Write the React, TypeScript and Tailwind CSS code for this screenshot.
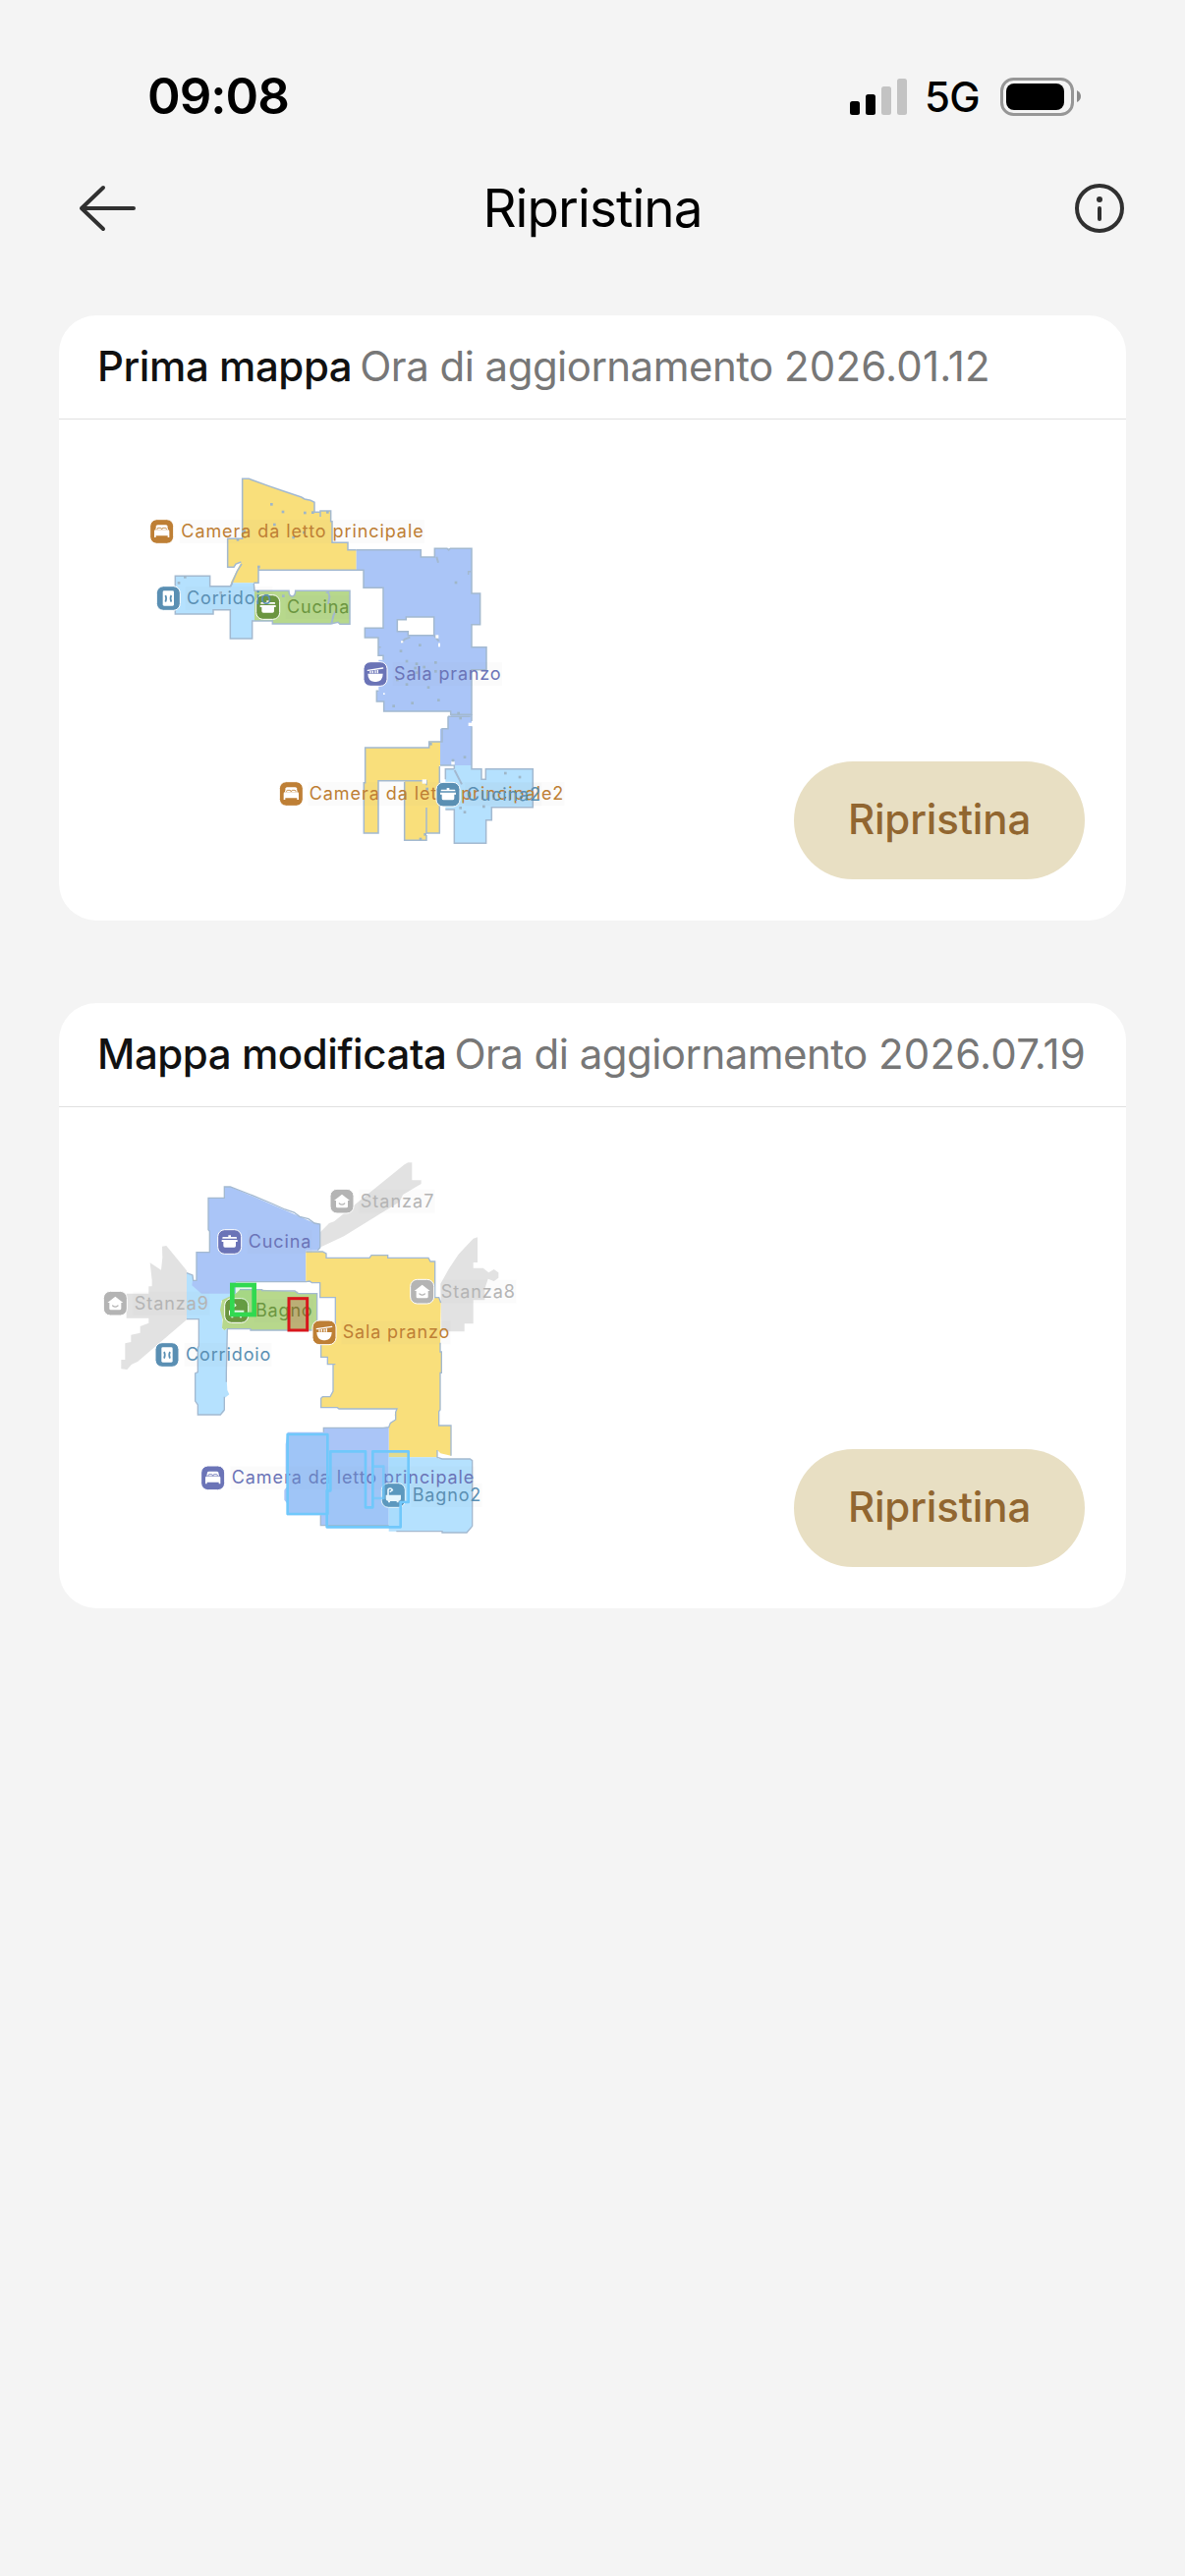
import React from 'react';

type RoomIcon = 'bed' | 'door' | 'pot' | 'bowl' | 'bath' | 'house';

interface RoomLabel {
  name: string;
  icon: RoomIcon;
  color: string;
  // icon center
  cx: number;
  cy: number;
  // text start and width
  x: number;
  width: number;
}

const ORANGE = '#be7f35';
const BLUE = '#5a8fb3';
const GREEN = '#6b9540';
const PURPLE = '#6b74b7';
const GRAY = '#b4b4b4';

const WALL = '#a3b9d0';

const firstMapLabels: RoomLabel[] = [
  { name: 'Camera da letto principale', icon: 'bed', color: ORANGE, cx: 74, cy: 213, x: 133, width: 739 },
  { name: 'Cucina', icon: 'pot', color: GREEN, cx: 398, cy: 444, x: 456, width: 190 },
  { name: 'Corridoio', icon: 'door', color: BLUE, cx: 94, cy: 417, x: 150, width: 259 },
  { name: 'Sala pranzo', icon: 'bowl', color: PURPLE, cx: 726, cy: 648, x: 783, width: 326 },
  { name: 'Camera da letto principale2', icon: 'bed', color: ORANGE, cx: 469, cy: 1014, x: 524, width: 776 },
  { name: 'Cucina2', icon: 'pot', color: BLUE, cx: 948, cy: 1016, x: 1004, width: 226 },
];

const editedMapLabels: RoomLabel[] = [
  { name: 'Stanza7', icon: 'house', color: GRAY, cx: 774, cy: 158, x: 830, width: 224 },
  { name: 'Stanza8', icon: 'house', color: GRAY, cx: 1019, cy: 434, x: 1076, width: 226 },
  { name: 'Stanza9', icon: 'house', color: GRAY, cx: 82, cy: 470, x: 140, width: 226 },
  { name: 'Cucina', icon: 'pot', color: PURPLE, cx: 431, cy: 282, x: 488, width: 191 },
  { name: 'Bagno', icon: 'bath', color: GREEN, cx: 452, cy: 492, x: 510, width: 173 },
  { name: 'Corridoio', icon: 'door', color: BLUE, cx: 240, cy: 627, x: 297, width: 259 },
  { name: 'Sala pranzo', icon: 'bowl', color: ORANGE, cx: 720, cy: 559, x: 776, width: 326 },
  { name: 'Camera da letto principale', icon: 'bed', color: PURPLE, cx: 380, cy: 1003, x: 437, width: 740 },
  { name: 'Bagno2', icon: 'bath', color: BLUE, cx: 931, cy: 1056, x: 989, width: 209 },
];

const IconShape: React.FC<{ icon: RoomIcon; color: string }> = ({ icon, color }) => {
  switch (icon) {
    case 'bed':
      return (
        <g>
          <path d="M-17 -17q1 -3 5 -3h24q4 0 5 3l2 11h-38z" fill="#fff" />
          <path d="M-14 -5v-3q0 -3 3 -3h7q3 0 3 3v3M1 -5v-3q0 -3 3 -3h7q3 0 3 3v3" fill="none" stroke={color} strokeWidth="2.5" />
          <path d="M-23 -1q0 -4 4 -4h38q4 0 4 4v19h-5v-5h-36v5h-5z" fill="#fff" />
        </g>
      );
    case 'door':
      return (
        <g>
          <rect x="-17" y="-23" width="34" height="46" rx="4" fill="#fff" />
          <path d="M-9 -9q5 9 0 20M9 -9q-5 9 0 20" fill="none" stroke={color} strokeWidth="5" />
        </g>
      );
    case 'pot':
      return (
        <g fill="#fff">
          <path d="M-4 -20h8v5h16q2 0 2 3v2h-44v-2q0 -3 2 -3h16z" />
          <path d="M-24 -6h48v6h-5v12q0 5 -5 5h-28q-5 0 -5 -5v-12h-5z" />
        </g>
      );
    case 'bowl':
      return (
        <g>
          <path d="M-23 -1h46q0 22 -20 25h-6q-20 -3 -20 -25z" fill="#fff" />
          <path d="M-23 -11L23 -18" stroke="#fff" strokeWidth="4" strokeLinecap="round" />
          <path d="M-15 -9v7M-8 -10v8M0 -11v9M7 -12v10" stroke="#fff" strokeWidth="4" />
        </g>
      );
    case 'bath':
      return (
        <g>
          <path d="M-16 0v-15q0 -6 6 -6q6 0 6 6" fill="none" stroke="#fff" strokeWidth="5" />
          <path d="M-11 -10l10 -7" stroke="#fff" strokeWidth="4" />
          <path d="M-23 -1h46v10q0 8 -7 8v5h-6v-4h-20v4h-6v-5q-7 0 -7 -8z" fill="#fff" />
        </g>
      );
    default:
      return (
        <g>
          <path d="M0 -21L24 -2h-6v18q0 4 -4 4h-28q-4 0 -4 -4v-18h-6z" fill="#fff" />
          <path d="M-8 7q8 7 16 0" fill="none" stroke={color} strokeWidth="4" strokeLinecap="round" />
        </g>
      );
  }
};

const Labels: React.FC<{ labels: RoomLabel[] }> = ({ labels }) => (
  <>
    {labels.map(({ name, icon, color, cx, cy, x, width }) => (
      <g key={name}>
        <rect x={x - 4} y={cy - 36} width={width + 8} height="72" fill="#999" opacity="0.04" />
        <text
          x={x}
          y={cy + 18}
          textLength={width}
          fill={color}
          className="font-['Inter',sans-serif] text-[54px] font-normal"
        >
          {name}
        </text>
        <g transform={`translate(${cx} ${cy})`}>
          <rect x="-36" y="-37" width="72" height="74" rx="21" fill={color} stroke="#fff" strokeWidth="3" />
          <IconShape icon={icon} color={color} />
        </g>
      </g>
    ))}
  </>
);

const dots = [
  [409, 130], [444, 153], [511, 156], [535, 155], [580, 154], [418, 192], [508, 216], [476, 231], [326, 212],
  [370, 321], [306, 238], [126, 370], [145, 352], [254, 400], [445, 410],
  [972, 369], [862, 560], [804, 578], [822, 609], [852, 617], [910, 613], [875, 627], [910, 640], [848, 630],
  [793, 666], [822, 680], [888, 689], [919, 728], [839, 737], [782, 746], [852, 644], [980, 768],
  [986, 783], [999, 902], [963, 912], [1123, 951], [1167, 963], [986, 1057], [999, 1070], [1057, 1053],
  [884, 999], [878, 1138], [864, 1152], [895, 862],
];

const FirstMap: React.FC = () => (
  <svg viewBox="-240 -129 2244 1530" className="h-[510px] w-[748px]" aria-label="Prima mappa">
    {/* rooms */}
    <path fill="#f9df7b" d="M320 52H340L540 124V154H558V150H590V182H594V247H642V269H668V330H369V370H284L304 330L316 306L300 312L294 322H275V235H320Z" />
    <path fill="#b5e1fe" d="M115 349H221V380H284L290 370H357V486H350V540H283V452H231V465H115Z" />
    <path fill="#b7d88c" d="M357 394H462Q462 411 472 411Q482 410 482 394H648V496H618L612 490L590 495H412V486H357Z" />
    <path fill="#aac5f7" d="M668 269H865V291H907V265H1020V402H1046V497H1020V566H1065V635H1020V927H924V815H948V778H956V762H752V732H730V700H736V605H750V592H735V537H694V508H750V385H690V331H668Z" />
    <path fill="#f9df7b" d="M695 873H890V854H924V927H922V1134H882V1156H815V974H735V1134H691V980H695Z" />
    <path fill="#b5e1fe" d="M967 927H1020V938H1050V970H1063V938H1207V1055H1081V1094H1064V1165H967V1062H940V938H967Z" />

    {/* walls */}
    <g fill="none" stroke={WALL} strokeWidth="4.5">
      <path d="M668 269H642V247H594V182H590V150H558V168M558 154H540V124L528 118L510 114L500 108L440 88L400 74L340 52H320V235H275V322H294L300 312L316 306M318 312L304 334L284 380H221V349H115V465H231V452H283V540H350V486H412V495H590L612 490L618 496H648V394H482Q482 410 472 411Q462 411 462 394H357L355 372" />
      <path d="M284 380L290 370M369 320V370H355M369 331H690V385H750V508H694V537H735V592H750V605M736 700H730V732H752V762H956V772H1020V635H1065V566H1020V497H1046V402H1020V265H955L950 270L945 265H907V291H865V269H668" />
      <path d="M793 482H820V474H905V530H826V518H793Z" fill="#fff" />
      <path d="M1020 772V792M1020 808V938H1050V970H1063V938H1207V1055H1081V1094H1064V1165H967V1062H940M940 970V938H967M967 938V927H924M922 930V1134H882V1056M948 778V815H930V855H890V873H695V980H691V1134H735V974H882V988M815 978V1156H882V1140M948 778H1016" />
      <path d="M582 396L586 412L582 435M608 450L598 470L592 495M913 290L918 308M968 942L990 985M806 552L816 542L832 536M905 530L920 548" strokeWidth="6" />
      <path d="M1018 335H1010V345M575 400h8M735 566h8" />
    </g>
    <g fill="#fff">
      <rect x="869" y="970" width="13" height="13" />
      <rect x="958" y="915" width="10" height="10" />
      <rect x="1010" y="797" width="12" height="10" />
      <rect x="910" y="529" width="9" height="10" />
      <rect x="918" y="554" width="6" height="11" />
      <rect x="804" y="547" width="7" height="6" />
      <rect x="750" y="706" width="5" height="5" />
    </g>
    {dots.map(([x, y]) => (
      <rect key={`${x}-${y}`} x={x - 4} y={y - 4} width="8" height="8" fill="#9fb6c8" />
    ))}

    <Labels labels={firstMapLabels} />
  </svg>
);

const EditedMap: React.FC = () => (
  <svg viewBox="-90 -129 2244 1530" className="h-[510px] w-[748px]" aria-label="Mappa modificata">
    {/* unexplored rooms */}
    <g fill="#e2e2e2">
      <path d="M225 296L238 294L300 370V520L150 648L132 656L118 672L100 670V642H112V592L130 588V566L158 560V540L184 530V515H116V440H184V418H194V400L188 346L222 368L226 330Z" />
      <path d="M705 300V255L735 225L750 220L965 46L976 40H988V94H1016V105L960 138L950 160L780 265Z" />
      <path d="M1175 272L1188 268V345H1175V362H1205L1222 376L1238 366L1252 376V392L1238 402L1220 395L1210 425V460H1175V532H1148V556H1078L1075 410L1100 365L1130 320Z" />
    </g>

    {/* rooms */}
    <path fill="#b5e1fe" d="M300 377L318 384V415L345 438H462V455L405 462L410 550H425L421 680L424 735L430 748L415 760V800L403 810H334V780L326 768V682L334 680V605L337 600V518H300Z" />
    <path fill="#aac5f7" d="M415 114H433L600 185L635 200L645 205L690 225L707 228V300L700 308H664V402H450V440H345L316 415L318 400H330V314H370V250L366 245V148H415Z" />
    <path fill="#b7d88c" d="M462 428H530L640 434V440H698V535L690 552H495V548H440L424 546L415 552L408 545L410 520L402 490L408 460L450 440Z" />
    <path fill="#f9df7b" d="M664 312H715L726 318V331H858L864 323H914V331H1038L1044 342H1058V452H1070L1076 468L1074 618H1078V682H1074V795L1070 800V843H1107V935L1075 928L1065 918V940H917V848L922 835L938 825L935 810L942 792H765L760 788H710V760L715 755H738L747 738V656H730V634H710V575H754V452H707V405H664Z" />
    <path fill="#aac5f7" d="M718 850H900L917 848V1148H709V1117H606V1080L598 1070V1040L606 1030L602 980V900L608 863H718Z" />
    <path fill="#b5e1fe" d="M917 940H1065L1070 945H1165V948H1172V1150L1165 1160L1155 1170H1080V1166H917Z" />

    {/* walls */}
    <g fill="none" stroke={WALL} strokeWidth="4">
      <path d="M700 308L707 300V228L690 225L672 212L645 205L628 192L600 183L560 165L500 140L433 114H415V148H366V245L370 250V314H330V400H320L318 384L300 377M300 518H337V600L334 605V680L326 684V768L334 780V810H403L415 795V755M421 710V680L424 548H495V552H690M698 535V440H640L630 432L530 431V428H462M450 404H664L675 402L682 407H707V452H754V575M710 575V634H730V656H754M747 656V738L738 755H715L710 760V788H760L765 792H942L938 802L938 825L922 835L917 848L900 850H718V863M709 1117V1148H917" />
      <path d="M664 312H715L726 318V331H858L864 323H914V331H1038L1044 342H1058V452H1070L1076 468M1074 590V618H1078V682H1074V795L1070 800V843H1107V935M1065 918V940L1080 945H1165L1172 950V1150L1155 1170H1080V1166H940" />
    </g>

    <Labels labels={editedMapLabels} />

    {/* carpets */}
    <g fill="#6cc5f8" fillOpacity="0.16" stroke="#70c8fb" strokeWidth="8" strokeLinejoin="round">
      <rect x="608" y="870" width="122" height="243" />
      <path d="M728 1153V1042H739V922H846V1093H868V922H977V1077H953V1153Z" />
      <path d="M868 968H901V1065H868" fill="none" strokeOpacity="0.75" />
    </g>

    {/* no-mop and restricted zones */}
    <rect x="439" y="414" width="67" height="90" fill="#31d950" fillOpacity="0.12" stroke="#31d950" strokeWidth="14" />
    <rect x="612" y="455" width="56" height="97" fill="#d8161c" fillOpacity="0.2" stroke="#d8161c" strokeWidth="9" />
  </svg>
);

const StatusBar: React.FC = () => (
  <div className="flex h-[156px] items-start justify-between pl-[150px] pr-[105px]">
    <span className="mt-[68px] text-[51px] font-semibold leading-[60px] tracking-[-1px]">09:08</span>
    <div className="mt-[76px] flex items-center">
      <svg viewBox="0 0 58 42" className="h-[42px] w-[58px]">
        <rect x="0" y="26" width="10" height="14" rx="2.5" />
        <rect x="16" y="19" width="10" height="21" rx="2.5" />
        <rect x="32" y="11" width="10" height="29" rx="2.5" fill="#c3c3c3" />
        <rect x="48" y="3" width="10" height="37" rx="2.5" fill="#c3c3c3" />
      </svg>
      <span className="ml-[18px] w-[77px] pt-0.5 text-[42px] font-medium leading-[42px] tracking-[-0.8px]">5G</span>
      <svg viewBox="0 0 83 42" className="h-[42px] w-[83px]">
        <rect x="1.5" y="3.5" width="72" height="36" rx="12" fill="none" stroke="#969696" strokeWidth="3" />
        <rect x="6" y="8" width="59" height="27" rx="8" />
        <path d="M78 15q4 2 4 6t-4 6z" fill="#8a8a8a" />
      </svg>
    </div>
  </div>
);

const NavBar: React.FC = () => (
  <header className="flex h-28 items-center justify-between px-[61px] pb-px">
    <button aria-label="Indietro" className="ml-[18px]">
      <svg viewBox="0 0 62 50" className="h-[50px] w-[62px]" fill="none" stroke="#303030" strokeWidth="4" strokeLinecap="round" strokeLinejoin="round">
        <path d="M26 4L4 25L26 46M4 25H57" />
      </svg>
    </button>
    <h1 className="pt-0.5 text-[53px] leading-none tracking-[-0.9px] text-black">Ripristina</h1>
    <button aria-label="Informazioni" className="ml-[28px]">
      <svg viewBox="0 0 52 52" className="h-[52px] w-[52px]" fill="none" stroke="#303030" strokeWidth="4" strokeLinecap="round">
        <circle cx="26" cy="26" r="23" />
        <circle cx="26" cy="17" r="3" fill="#303030" stroke="none" />
        <path d="M26 26V37" />
      </svg>
    </button>
  </header>
);

interface MapCardProps {
  title: string;
  date: string;
  children: React.ReactNode;
}

const MapCard: React.FC<MapCardProps> = ({ title, date, children }) => (
  <section className="flex h-[616px] flex-col overflow-hidden rounded-[38px] bg-white">
    <div className="flex h-[106px] items-center gap-2 whitespace-nowrap border-b-[1.5px] border-[#e0e0e0] pb-0.5 pl-[39px]">
      <h2 className="text-[42px] font-medium tracking-[-0.43px] text-[#111]">{title}</h2>
      <p className="text-[42px] tracking-[-0.53px] text-[#777]">
        Ora di aggiornamento <span className="tracking-[0.18px]">{date}</span>
      </p>
    </div>
    <div className="flex flex-1 items-end justify-between pr-[42px]">
      {children}
      <button className="mb-[42px] h-[120px] w-[296px] rounded-full bg-[#e8dfc3] pb-[3px] text-[42px] font-medium tracking-[-0.15px] text-[#916630]">
        Ripristina
      </button>
    </div>
  </section>
);

const App: React.FC = () => {
  return (
    <main className="min-h-[2622px] w-[1206px] bg-[#f4f4f4] font-['Inter',sans-serif] text-black">
      <StatusBar />
      <NavBar />
      <div className="flex flex-col gap-[84px] px-[60px] pt-[53px]">
        <MapCard title="Prima mappa" date="2026.01.12">
          <FirstMap />
        </MapCard>
        <MapCard title="Mappa modificata" date="2026.07.19">
          <EditedMap />
        </MapCard>
      </div>
    </main>
  );
};

export default App;
